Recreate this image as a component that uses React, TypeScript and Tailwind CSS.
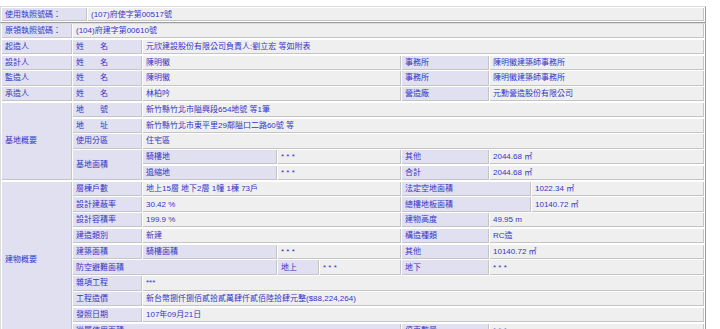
import React from "react";

const base =
  "flex items-center pl-[3px] pt-[1px] border-r border-b border-[#c4c4c4] whitespace-nowrap overflow-hidden leading-none text-[#3434c8]";

function L({ cls = "", children }: { cls?: string; children?: React.ReactNode }) {
  return <div className={`${base} bg-[#e0e0f0] ${cls}`}>{children}</div>;
}
function V({ cls = "", children }: { cls?: string; children?: React.ReactNode }) {
  return <div className={`${base} bg-[#efefef] ${cls}`}>{children}</div>;
}

export default function App() {
  return (
    <div
      className="h-[329px] w-[720px] overflow-hidden bg-white pt-[6px] text-[8px]"
      style={{ fontFamily: '"Liberation Sans", "Noto Sans CJK TC", sans-serif' }}
    >
      <div className="w-[706px] border border-t-[#dcdcdc] border-l-[#dcdcdc] border-r-[#9c9c9c] border-b-[#9c9c9c] p-[1px] bg-white">
        <div className="grid grid-cols-[85px_1fr] gap-x-[1px] auto-rows-[13px]">
          <L>使用執照號碼：</L>
          <V>(107)府使字第00517號</V>
        </div>
      </div>
      <div className="w-[706px] border border-t-[#dcdcdc] border-l-[#dcdcdc] border-r-[#9c9c9c] border-b-[#9c9c9c] px-[1px] pb-[1px] bg-white">
        <div className="grid grid-cols-[70px_69px_134px_41px_81px_87px_41px_172px] gap-x-[1px] gap-y-[1.5px] auto-rows-[14.28px]">
          {/* row 0 */}
          <L>原領執照號碼：</L>
          <V cls="col-span-7">(104)府建字第00610號</V>
          {/* row 1 */}
          <L>起造人</L>
          <L>姓　　名</L>
          <V cls="col-span-6">元欣建設股份有限公司負責人:劉立宏 等如附表</V>
          {/* row 2 */}
          <L>設計人</L>
          <L>姓　　名</L>
          <V cls="col-span-3">陳明徽</V>
          <L>事務所</L>
          <V cls="col-span-2">陳明徽建築師事務所</V>
          {/* row 3 */}
          <L>監造人</L>
          <L>姓　　名</L>
          <V cls="col-span-3">陳明徽</V>
          <L>事務所</L>
          <V cls="col-span-2">陳明徽建築師事務所</V>
          {/* row 4 */}
          <L>承造人</L>
          <L>姓　　名</L>
          <V cls="col-span-3">林柏吟</V>
          <L>營造廠</L>
          <V cls="col-span-2">元勳營造股份有限公司</V>
          {/* row 5 */}
          <L cls="row-span-5">基地概要</L>
          <L>地　　號</L>
          <V cls="col-span-6">新竹縣竹北市隘興段654地號 等1筆</V>
          {/* row 6 */}
          <L>地　　址</L>
          <V cls="col-span-6">新竹縣竹北市東平里29鄰隘口二路60號 等</V>
          {/* row 7 */}
          <L>使用分區</L>
          <V cls="col-span-6">住宅區</V>
          {/* row 8 */}
          <L cls="row-span-2">基地面積</L>
          <L>騎樓地</L>
          <V cls="col-span-2">* * *</V>
          <L>其他</L>
          <V cls="col-span-2">2044.68 ㎡</V>
          {/* row 9 */}
          <L>退縮地</L>
          <V cls="col-span-2">* * *</V>
          <L>合計</L>
          <V cls="col-span-2">2044.68 ㎡</V>
          {/* row 10 */}
          <L cls="row-span-10">建物概要</L>
          <L>層棟戶數</L>
          <V cls="col-span-3">地上15層 地下2層 1幢 1棟 73戶</V>
          <L cls="col-span-2">法定空地面積</L>
          <V>1022.34 ㎡</V>
          {/* row 11 */}
          <L>設計建蔽率</L>
          <V cls="col-span-3">30.42 %</V>
          <L cls="col-span-2">總樓地板面積</L>
          <V>10140.72 ㎡</V>
          {/* row 12 */}
          <L>設計容積率</L>
          <V cls="col-span-3">199.9 %</V>
          <L>建物高度</L>
          <V cls="col-span-2">49.95 m</V>
          {/* row 13 */}
          <L>建造類別</L>
          <V cls="col-span-3">新建</V>
          <L>構造種類</L>
          <V cls="col-span-2">RC造</V>
          {/* row 14 */}
          <L>建築面積</L>
          <L>騎樓面積</L>
          <V cls="col-span-2">* * *</V>
          <L>其他</L>
          <V cls="col-span-2">10140.72 ㎡</V>
          {/* row 15 */}
          <L cls="col-span-2">防空避難面積</L>
          <L>地上</L>
          <V>* * *</V>
          <L>地下</L>
          <V cls="col-span-2">* * *</V>
          {/* row 16 */}
          <L>雜項工程</L>
          <V cls="col-span-6">***</V>
          {/* row 17 */}
          <L>工程造價</L>
          <V cls="col-span-6">新台幣捌仟捌佰貳拾貳萬肆仟貳佰陸拾肆元整($88,224,264)</V>
          {/* row 18 */}
          <L>發照日期</L>
          <V cls="col-span-6">107年09月21日</V>
          {/* row 19 */}
          <L cls="col-span-4">從屬使用面積</L>
          <L>停車數量</L>
          <V cls="col-span-2">* * *</V>
        </div>
      </div>
    </div>
  );
}
